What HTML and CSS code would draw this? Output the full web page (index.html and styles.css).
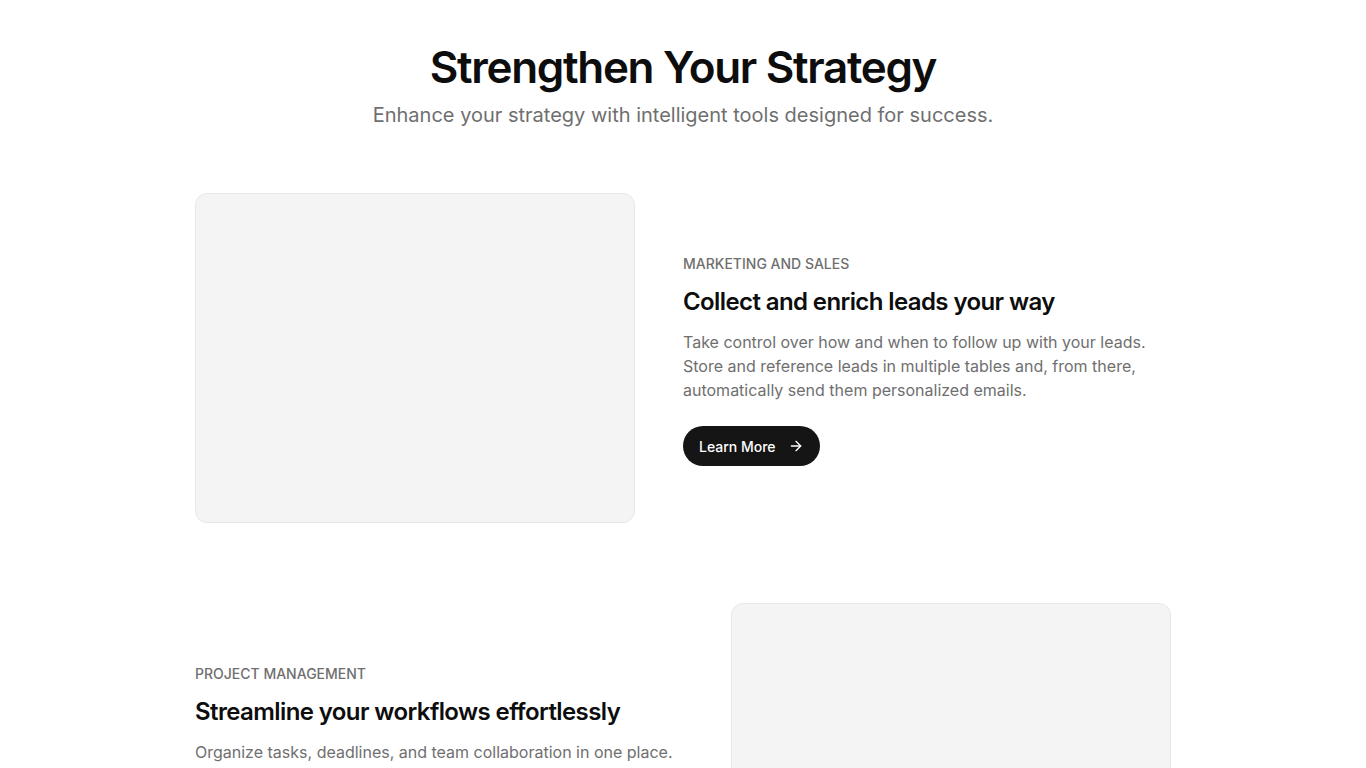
FILE: index.html
```html
<!DOCTYPE html>
<html lang="en">
<head>
<meta charset="utf-8">
<title>Strengthen Your Strategy</title>
<link rel="stylesheet" href="styles.css">
</head>
<body>
<section class="features">
  <header class="intro">
    <h1 class="intro-title">Strengthen Your Strategy</h1>
    <p class="intro-sub">Enhance your strategy with intelligent tools designed for success.</p>
  </header>

  <div class="rows">
    <article class="row">
      <div class="media"></div>
      <div class="copy">
        <p class="eyebrow">MARKETING AND SALES</p>
        <h2 class="copy-title">Collect and enrich leads your way</h2>
        <p class="copy-text">Take control over how and when to follow up with your leads. Store and reference leads in multiple tables and, from there, automatically send them personalized emails.</p>
        <a class="btn" href="#">Learn More
          <svg class="btn-icon" viewBox="0 0 24 24" width="16" height="16" fill="none" stroke="currentColor" stroke-width="2" stroke-linecap="round" stroke-linejoin="round"><path d="M5 12h14"/><path d="M12 5l7 7-7 7"/></svg>
        </a>
      </div>
    </article>

    <article class="row row-reverse">
      <div class="media"></div>
      <div class="copy">
        <p class="eyebrow">PROJECT MANAGEMENT</p>
        <h2 class="copy-title">Streamline your workflows effortlessly</h2>
        <p class="copy-text">Organize tasks, deadlines, and team collaboration in one place. Assign work, track progress, and keep every project moving forward on schedule.</p>
        <a class="btn" href="#">Learn More
          <svg class="btn-icon" viewBox="0 0 24 24" width="16" height="16" fill="none" stroke="currentColor" stroke-width="2" stroke-linecap="round" stroke-linejoin="round"><path d="M5 12h14"/><path d="M12 5l7 7-7 7"/></svg>
        </a>
      </div>
    </article>
  </div>
</section>
</body>
</html>
```

FILE: styles.css
```css
* { box-sizing: border-box; }

html, body {
  margin: 0;
  padding: 0;
  background: #ffffff;
  font-family: Inter, "Noto Sans", "Liberation Sans", sans-serif;
  color: #111111;
}

.features {
  width: 976px;
  margin: 0 auto;
  padding-top: 40px;
}

.intro {
  text-align: center;
}

.intro-title {
  margin: 0;
  font-size: 44px;
  line-height: 54px;
  font-weight: 600;
  letter-spacing: -0.03em;
  color: #0d0d0d;
}

.intro-sub {
  margin: 6px 0 0;
  font-size: 20px;
  line-height: 30px;
  color: #6f6f6f;
}

.rows {
  margin-top: 63px;
  display: flex;
  flex-direction: column;
  gap: 80px;
}

.row {
  display: flex;
  align-items: center;
  gap: 48px;
}

.row-reverse {
  flex-direction: row-reverse;
}

.media {
  flex: 0 0 440px;
  height: 330px;
  background: #f4f4f4;
  border: 1px solid #e8e8e8;
  border-radius: 12px;
}

.copy {
  flex: 1;
  padding-top: 4px;
}

.eyebrow {
  margin: 0;
  font-size: 14px;
  line-height: 20px;
  color: #6f6f6f;
  font-weight: 500;
}

.copy-title {
  margin: 12px 0 0;
  font-size: 24px;
  line-height: 32px;
  font-weight: 600;
  letter-spacing: -0.025em;
  color: #0d0d0d;
}

.copy-text {
  margin: 12px 0 0;
  font-size: 16px;
  line-height: 24px;
  color: #6f6f6f;
}

.btn {
  margin-top: 24px;
  display: inline-flex;
  align-items: center;
  gap: 12px;
  height: 40px;
  padding: 0 16px;
  border-radius: 999px;
  background: #151515;
  color: #ffffff;
  font-size: 14px;
  font-weight: 500;
  text-decoration: none;
}

.btn-icon {
  display: block;
}
```
